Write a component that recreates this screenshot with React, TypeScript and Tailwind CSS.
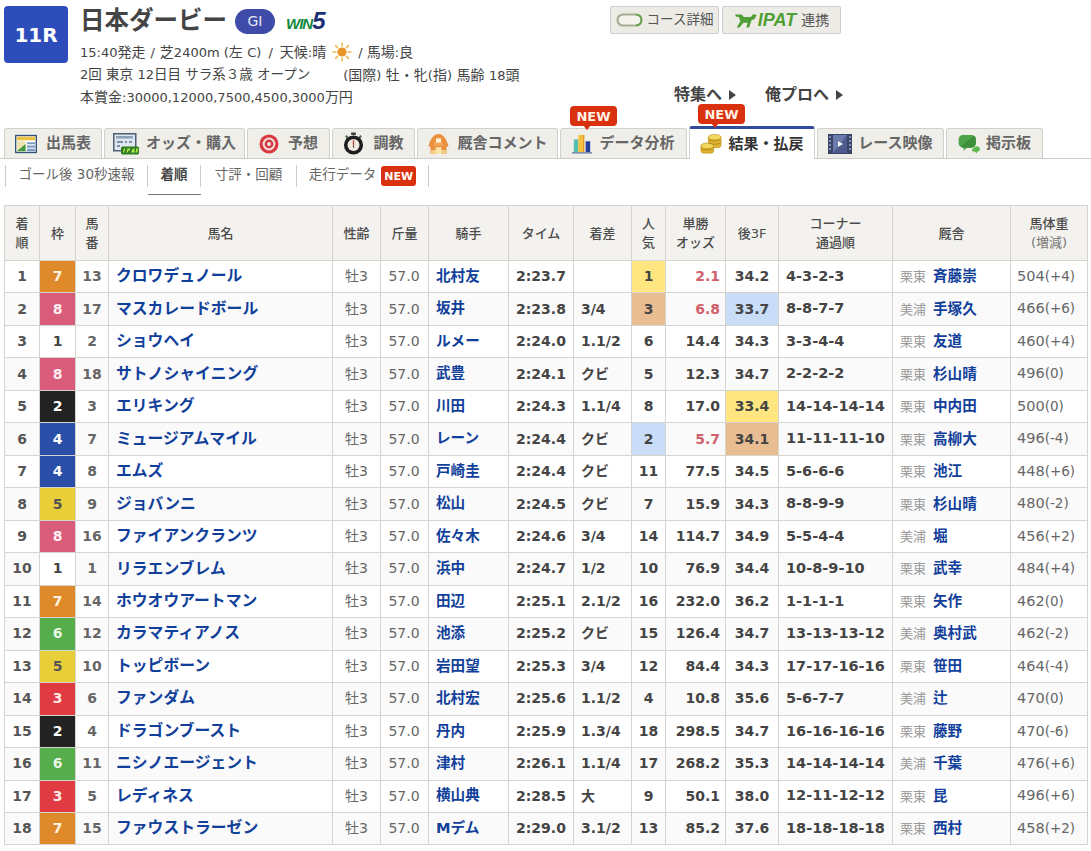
import type { ReactNode } from 'react';

type Row = [number, number, string, string, string, string, number, string, string, string, string, string, string, string];

// 枠 着順 etc. come straight from the result list
const rows: Row[] = [
  [7, 13, 'クロワデュノール', '北村友', '2:23.7', '', 1, '2.1', '34.2', '4-3-2-3', '栗東', '斉藤崇', '504', '(+4)'],
  [8, 17, 'マスカレードボール', '坂井', '2:23.8', '3/4', 3, '6.8', '33.7', '8-8-7-7', '美浦', '手塚久', '466', '(+6)'],
  [1, 2, 'ショウヘイ', 'ルメー', '2:24.0', '1.1/2', 6, '14.4', '34.3', '3-3-4-4', '栗東', '友道', '460', '(+4)'],
  [8, 18, 'サトノシャイニング', '武豊', '2:24.1', 'クビ', 5, '12.3', '34.7', '2-2-2-2', '栗東', '杉山晴', '496', '(0)'],
  [2, 3, 'エリキング', '川田', '2:24.3', '1.1/4', 8, '17.0', '33.4', '14-14-14-14', '栗東', '中内田', '500', '(0)'],
  [4, 7, 'ミュージアムマイル', 'レーン', '2:24.4', 'クビ', 2, '5.7', '34.1', '11-11-11-10', '栗東', '高柳大', '496', '(-4)'],
  [4, 8, 'エムズ', '戸崎圭', '2:24.4', 'クビ', 11, '77.5', '34.5', '5-6-6-6', '栗東', '池江', '448', '(+6)'],
  [5, 9, 'ジョバンニ', '松山', '2:24.5', 'クビ', 7, '15.9', '34.3', '8-8-9-9', '栗東', '杉山晴', '480', '(-2)'],
  [8, 16, 'ファイアンクランツ', '佐々木', '2:24.6', '3/4', 14, '114.7', '34.9', '5-5-4-4', '美浦', '堀', '456', '(+2)'],
  [1, 1, 'リラエンブレム', '浜中', '2:24.7', '1/2', 10, '76.9', '34.4', '10-8-9-10', '栗東', '武幸', '484', '(+4)'],
  [7, 14, 'ホウオウアートマン', '田辺', '2:25.1', '2.1/2', 16, '232.0', '36.2', '1-1-1-1', '栗東', '矢作', '462', '(0)'],
  [6, 12, 'カラマティアノス', '池添', '2:25.2', 'クビ', 15, '126.4', '34.7', '13-13-13-12', '美浦', '奥村武', '462', '(-2)'],
  [5, 10, 'トッピボーン', '岩田望', '2:25.3', '3/4', 12, '84.4', '34.3', '17-17-16-16', '栗東', '笹田', '464', '(-4)'],
  [3, 6, 'ファンダム', '北村宏', '2:25.6', '1.1/2', 4, '10.8', '35.6', '5-6-7-7', '美浦', '辻', '470', '(0)'],
  [2, 4, 'ドラゴンブースト', '丹内', '2:25.9', '1.3/4', 18, '298.5', '34.7', '16-16-16-16', '栗東', '藤野', '470', '(-6)'],
  [6, 11, 'ニシノエージェント', '津村', '2:26.1', '1.1/4', 17, '268.2', '35.3', '14-14-14-14', '美浦', '千葉', '476', '(+6)'],
  [3, 5, 'レディネス', '横山典', '2:28.5', '大', 9, '50.1', '38.0', '12-11-12-12', '栗東', '昆', '496', '(+6)'],
  [7, 15, 'ファウストラーゼン', 'Mデム', '2:29.0', '3.1/2', 13, '85.2', '37.6', '18-18-18-18', '栗東', '西村', '458', '(+2)'],
];

const wakuColor: Record<number, string> = {
  1: 'bg-white text-[#444]',
  2: 'bg-[#222222] text-white',
  3: 'bg-[#e03a42] text-[#ffe9e9]',
  4: 'bg-[#2b4fa8] text-white',
  5: 'bg-[#e8cf3a] text-[#555]',
  6: 'bg-[#55ad4c] text-[#eaf7e6]',
  7: 'bg-[#de8a2a] text-[#fff3e0]',
  8: 'bg-[#d95c7a] text-[#ffeef2]',
};

const rankBg: Record<number, string> = {
  1: 'bg-[#ffe680]',
  2: 'bg-[#c9ddf9]',
  3: 'bg-[#e9bd92]',
};

const last3fBg: Record<string, string> = {
  '33.4': 'bg-[#ffe680]',
  '33.7': 'bg-[#c9ddf9]',
  '34.1': 'bg-[#e9bd92]',
};

const colWidths = [
  'w-[35px]', 'w-[36px]', 'w-[33px]', 'w-[224px]', 'w-[48px]', 'w-[48px]', 'w-[80px]', 'w-[65px]',
  'w-[58px]', 'w-[34px]', 'w-[60px]', 'w-[53px]', 'w-[114px]', 'w-[118px]', 'w-[77px]',
];

const th = 'border border-[#d5d4cf] bg-[#f3f2ee] text-center text-[13px] font-medium leading-[19px] text-[#4c4c4c]';
const td = 'border border-[#d5d4cf] p-0 pb-px leading-none';

// Latin and digits run a little smaller than the kana in the info lines
function L ({ children }: { children: ReactNode }) {
  return <span className="text-[13px]">{children}</span>;
}

function SunIcon () {
  return (
    <svg viewBox="0 0 20 20" className="h-5 w-5">
      <g stroke="#eebb55" strokeWidth="1.6" strokeLinecap="round">
        <path d="M10 1v3M10 16v3M1 10h3M16 10h3M3.6 3.6l2 2M14.4 14.4l2 2M3.6 16.4l2-2M14.4 5.6l2-2" />
      </g>
      <circle cx="10" cy="10" r="4.6" fill="#e9952b" />
    </svg>
  );
}

function TrackIcon () {
  return (
    <svg viewBox="0 0 28 14" className="h-[14px] w-[28px]">
      <rect x="1.5" y="1.5" width="24" height="11" rx="5.5" fill="#f4f3ee" stroke="#a8ad90" strokeWidth="2.2" />
      <path d="M20 1.6c3.5 0 5.5 2.4 5.5 5.4s-2 5.4-5.5 5.4" fill="none" stroke="#5aa34a" strokeWidth="1.6" />
    </svg>
  );
}

function HorseIcon () {
  return (
    <svg viewBox="0 0 22 14" className="h-[15px] w-[24px]">
      <path d="M1 1.5h6l2 2.3h6.500L18 1l3 1-2 3.500-3 1.600-2 6.400h-2.600l1-4.400H8.500L5 13.500H2.300l3.500-5.700-1.500-4L1.300 3.300z" fill="#4f9f34" />
    </svg>
  );
}

function ShutsubaIcon () {
  return (
    <svg viewBox="0 0 24 20" className="h-[20px] w-[22px]">
      <rect x="0.75" y="0.75" width="22.5" height="18.5" fill="#fff" stroke="#33527a" strokeWidth="1.5" />
      <rect x="2" y="2" width="20" height="4" fill="#edc243" />
      <rect x="2" y="7" width="9.5" height="11" fill="#eee3b0" />
      <path d="M2 18l9.5-8v8z" fill="#3f9a3d" />
      <path d="M13 8h9v2.4h-9zM13 11.6h9V14h-9zM13 15.2h9V18h-9z" fill="#7d9cc4" />
    </svg>
  );
}

function OddsIcon () {
  return (
    <svg viewBox="0 0 26 22" className="h-[22px] w-[26px]">
      <rect x="0.75" y="0.75" width="22" height="17" fill="#dfe6ee" stroke="#4c5f78" strokeWidth="1.5" />
      <rect x="3" y="3" width="17" height="2.5" fill="#8ca0b8" />
      <path d="M4 8h6v2H4zM12 8h2v2h-2zM16 8h3v2h-3zM4 12h3v2H4z" fill="#7b8ea5" />
      <rect x="8" y="13.5" width="18" height="8" rx="1.5" fill="#2f7d24" />
      <path d="M10 19.5l1-4h1.200l-1 4zM13.500 19.500l1-4H17v2h-1.800l-.5 2zM18 19.500l2-4h1.200l.5 4zM22.500 19.500l.8-4H25l-.8 4z" fill="#b8f04a" />
    </svg>
  );
}

function TargetIcon () {
  return (
    <svg viewBox="0 0 20 20" className="h-5 w-5">
      <circle cx="10" cy="10" r="9.5" fill="#d8393f" />
      <circle cx="10" cy="10" r="6.4" fill="#f5dfe0" />
      <circle cx="10" cy="10" r="4.4" fill="#cf3b40" />
      <circle cx="10" cy="10" r="1.9" fill="#f5e6e6" />
    </svg>
  );
}

function WatchIcon () {
  return (
    <svg viewBox="0 0 22 24" className="h-[23px] w-[21px]">
      <rect x="8.5" y="0.5" width="5" height="2.5" fill="#3a3a3a" />
      <path d="M3 4l2.5 2.5M19 4l-2.500 2.500" stroke="#4b6b4a" strokeWidth="2.2" />
      <circle cx="11" cy="13.5" r="10" fill="#1d1d1f" />
      <circle cx="11" cy="13.5" r="6.3" fill="#f2ece0" />
      <path d="M11 13.5V8.5" stroke="#c9403a" strokeWidth="1.4" />
      <path d="M11 13.5v3" stroke="#555" strokeWidth="1.2" />
    </svg>
  );
}

function BarnIcon () {
  return (
    <svg viewBox="0 0 22 22" className="h-[22px] w-[23px]">
      <path d="M11 1C6 1 3 6 1 13l2 1v7h16v-7l2-1C19 6 16 1 11 1z" fill="#ea8f3e" />
      <path d="M11 3.5L5 13h12z" fill="#f2a45c" />
      <rect x="8.5" y="5.5" width="5" height="4" fill="#fff3d8" />
      <rect x="3.5" y="14" width="15" height="7" fill="#f4cd84" />
      <rect x="8" y="14.5" width="6" height="6.5" fill="#f8e4a8" />
      <path d="M3.5 14h4.5v3H3.5zM14 14h4.5v3H14z" fill="#ea8f3e" />
    </svg>
  );
}

function BarsIcon () {
  return (
    <svg viewBox="0 0 22 22" className="h-[22px] w-[20px]">
      <rect x="2" y="6" width="5" height="14" fill="#58bfb0" />
      <rect x="7" y="1" width="5" height="19" fill="#f2c23a" />
      <rect x="12" y="1" width="1.6" height="19" fill="#e9972d" />
      <rect x="15" y="8" width="5" height="12" fill="#23419a" />
      <rect x="0" y="20" width="22" height="1.5" fill="#6a7fa8" />
    </svg>
  );
}

function CoinsIcon () {
  return (
    <svg viewBox="0 0 24 22" className="h-[22px] w-[22px]">
      <g fill="#e0b52f" stroke="#b48a1c" strokeWidth="0.6">
        <rect x="9" y="2" width="14" height="13" rx="3" />
        <ellipse cx="16" cy="3.5" rx="7" ry="3" fill="#f3d75e" />
        <rect x="1" y="11" width="14" height="10" rx="3" />
        <ellipse cx="8" cy="13" rx="7" ry="3" fill="#f3d75e" />
      </g>
      <path d="M9.5 6.5c3 1.6 10 1.6 13 0M9.5 10c3 1.6 10 1.6 13 0M1.5 16.5c3 1.6 10 1.6 13 0" fill="none" stroke="#a87f14" strokeWidth="0.8" />
    </svg>
  );
}

function MovieIcon () {
  return (
    <svg viewBox="0 0 24 20" className="h-[20px] w-[24px]">
      <rect width="24" height="20" fill="#3a4468" />
      <path d="M5 1h14v18H5z" fill="#6b7bab" />
      <path d="M5 19L19 1v18z" fill="#4d5c8d" />
      <path d="M10 7l5 3-5 3z" fill="#f4f4f8" />
      <path d="M1 2h2v2H1zM1 6h2v2H1zM1 10h2v2H1zM1 14h2v2H1zM21 2h2v2h-2zM21 6h2v2h-2zM21 10h2v2h-2zM21 14h2v2h-2z" fill="#8890a8" />
    </svg>
  );
}

function ChatIcon () {
  return (
    <svg viewBox="0 0 24 22" className="h-[20px] w-[23px]">
      <path d="M5 1h9c3 0 5 2 5 5v4c0 3-2 5-5 5H9l-3.5 3.500V15C2.500 15 0 13 0 10V6c0-3 2-5 5-5z" fill="#4da34a" />
      <path d="M2 14L17 1.800c1.400.9 2 2.200 2 4.200v4c0 3-2 5-5 5H5.500z" fill="#3c8f3c" />
      <path d="M19 13.500c2.800 0 4.500 1 4.500 3s-1.500 3-3 3l-.5 2-2-2c-2 0-3.500-1-3.500-2.500z" fill="#5cb84f" />
    </svg>
  );
}

function Bubble ({ className }: { className: string }) {
  return (
    <span className={`absolute flex h-[20px] w-[47px] items-center justify-center rounded-[4px] bg-[#d9300f] text-[13px] font-bold leading-none text-[#fff3e6] after:absolute after:left-[13px] after:top-[19px] after:border-x-[4px] after:border-t-[5px] after:border-x-transparent after:border-t-[#d9300f] after:content-[''] ${className}`}>
      NEW
    </span>
  );
}

function Tab ({ width, gap, icon, label, active, children }: { width: string; gap: string; icon: ReactNode; label: string; active?: boolean; children?: ReactNode }) {
  return (
    <div
      className={`relative flex items-center justify-center rounded-t-[3px] border border-b-0 text-[15px] font-bold ${width} ${gap} ${
        active
          ? 'z-10 -mb-px h-[33px] border-x-[#d0d0cc] border-t-[3px] border-t-[#2f4b9a] bg-white text-[#333]'
          : 'h-[30px] border-[#d0d0cc] bg-[#efeee9] text-[#666]'
      }`}
    >
      {icon}
      <span>{label}</span>
      {children}
    </div>
  );
}

function SubItem ({ children, active, width }: { children: ReactNode; active?: boolean; width: string }) {
  return (
    <div className={`flex h-[36px] items-start justify-center pt-[6px] ${width} ${active ? 'border-b border-b-[#777]' : ''}`}>
      <div className="flex h-[22px] w-full items-center justify-center gap-[5px] border-r border-r-[#ccc] pb-[3px]">{children}</div>
    </div>
  );
}

export default function App () {
  return (
    <div className="h-[851px] w-[1091px] overflow-hidden bg-white font-['DejaVu_Sans','Noto_Sans_CJK_JP',sans-serif] text-[#444]">
      {/* レース情報 */}
      <div className="flex h-[128px]">
        <div className="ml-1 mt-[6px] flex h-[57px] w-[64px] items-center justify-center rounded-[4px] bg-[#2d4dbb] text-[20px] font-bold text-white">
          11R
        </div>
        <div className="ml-[12px] w-[530px]">
          <div className="mt-[6px] flex h-[30px] items-center">
            <h1 className="text-[24.5px] font-bold leading-none text-[#444]">日本ダービー</h1>
            <span className="ml-[8px] flex h-[25px] w-[40px] items-center justify-center rounded-full bg-[#3f4ba8] text-[14px] leading-none text-[#e8e8f4]">GI</span>
            <span className="ml-[11px] flex items-baseline font-['Liberation_Sans'] font-bold italic leading-none">
              <span className="text-[15px] tracking-[-1px] text-[#128a3c]">WIN</span>
              <span className="text-[24px] text-[#1c2f74]">5</span>
            </span>
          </div>
          <div className="mt-[4px] flex h-[24px] items-center whitespace-pre text-[14px] leading-none">
            <span><L>15:40</L>発走<span className="mx-[5px] text-[13px]">/</span>芝<L>2400m (</L>左 <L>C)</L><span className="mx-[7px] text-[13px]">/</span>天候<L>:</L>晴</span>
            <span className="mx-[6px]"><SunIcon /></span>
            <span><L>/ </L>馬場<L>:</L>良</span>
          </div>
          <div className="flex h-[22px] items-center whitespace-pre text-[14px] leading-none">
            <span className="text-[13.5px]"><L>2</L>回 東京 <L>12</L>日目 サラ系３歳 オープン</span>
            <span className="ml-[33px]"><L>(</L>国際<L>)</L> 牡・牝<L>(</L>指<L>)</L> 馬齢 <L>18</L>頭</span>
          </div>
          <div className="flex h-[22px] items-center whitespace-pre text-[14px] leading-none">
            <span>本賞金<L>:30000,12000,7500,4500,3000</L>万円</span>
          </div>
        </div>
        <div className="flex flex-col">
          <div className="mt-[6px] flex gap-[3px]">
            <div className="flex h-[28px] w-[109px] items-center justify-center gap-[3px] rounded-[2px] border border-[#ccc] bg-[#edebe6] text-[13.5px] leading-none text-[#555]">
              <TrackIcon />
              コース詳細
            </div>
            <div className="flex h-[28px] w-[119px] items-center justify-center gap-[5px] rounded-[2px] border border-[#ccc] bg-[#edebe6] text-[14px] leading-none text-[#555]">
              <span className="flex items-center font-['Liberation_Sans'] text-[18px] font-bold italic text-[#4f9f34]">
                <HorseIcon />IPAT
              </span>
              連携
            </div>
          </div>
          <div className="ml-[64px] mt-[53px] flex text-[16px] font-bold leading-none text-[#444]">
            <span className="flex w-[91px] items-center gap-[7px]">
              特集へ
              <span className="border-y-[5px] border-l-[7px] border-y-transparent border-l-[#444]" />
            </span>
            <span className="flex items-center gap-[7px]">
              俺プロへ
              <span className="border-y-[5px] border-l-[7px] border-y-transparent border-l-[#444]" />
            </span>
          </div>
        </div>
      </div>

      {/* タブ */}
      <div className="flex h-[31px] items-end gap-[2px] border-b border-b-[#ccc] pl-1">
        <Tab width="w-[98px]" gap="gap-[9px]" icon={<ShutsubaIcon />} label="出馬表" />
        <Tab width="w-[141px]" gap="gap-[7px]" icon={<OddsIcon />} label="オッズ・購入" />
        <Tab width="w-[83px]" gap="gap-[9px]" icon={<TargetIcon />} label="予想" />
        <Tab width="w-[83px]" gap="gap-[9px]" icon={<WatchIcon />} label="調教" />
        <Tab width="w-[141px]" gap="gap-[7px]" icon={<BarnIcon />} label="厩舎コメント" />
        <Tab width="w-[127px]" gap="gap-[7px]" icon={<BarsIcon />} label="データ分析">
          <Bubble className="left-[9px] top-[-23px]" />
        </Tab>
        <Tab width="w-[126px]" gap="gap-[6px]" icon={<CoinsIcon />} label="結果・払戻" active>
          <Bubble className="left-[8px] top-[-25px]" />
        </Tab>
        <Tab width="w-[127px]" gap="gap-[6px]" icon={<MovieIcon />} label="レース映像" />
        <Tab width="w-[97px]" gap="gap-[5px]" icon={<ChatIcon />} label="掲示板" />
      </div>

      {/* サブメニュー */}
      <div className="flex h-[46px] pl-[5px] text-[13.5px] leading-none text-[#666]">
        <div className="mt-[6px] h-[22px] border-l border-l-[#ccc]" />
        <SubItem width="w-[142px]">ゴール後 30秒速報</SubItem>
        <SubItem width="w-[53px]" active><span className="font-bold text-[#444]">着順</span></SubItem>
        <SubItem width="w-[96px]">寸評・回顧</SubItem>
        <SubItem width="w-[132px]">
          走行データ
          <span className="mt-[3px] flex h-[20px] w-[35px] items-center justify-center rounded-[3px] bg-[#d9300f] text-[11px] font-bold text-white">NEW</span>
        </SubItem>
      </div>

      {/* 着順テーブル */}
      <div className="pl-1">
        <table className="w-[1083px] table-fixed border-collapse">
          <colgroup>
            {colWidths.map((w, i) => <col key={i} className={w} />)}
          </colgroup>
          <thead>
            <tr className="h-[55px]">
              <th className={th}>着<br />順</th>
              <th className={th}>枠</th>
              <th className={th}>馬<br />番</th>
              <th className={th}>馬名</th>
              <th className={th}>性齢</th>
              <th className={th}>斤量</th>
              <th className={th}>騎手</th>
              <th className={th}>タイム</th>
              <th className={th}>着差</th>
              <th className={th}>人<br />気</th>
              <th className={th}>単勝<br />オッズ</th>
              <th className={th}>後3F</th>
              <th className={th}>コーナー<br />通過順</th>
              <th className={th}>厩舎</th>
              <th className={th}>馬体重<br /><span className="font-normal text-[#777]">(増減)</span></th>
            </tr>
          </thead>
          <tbody>
            {rows.map((r, i) => (
              <tr key={i} className={`h-[32.47px] ${i % 2 === 1 ? 'bg-[#fafafa]' : 'bg-white'}`}>
                <td className={`${td} text-center text-[14px] font-bold text-[#555]`}>{i + 1}</td>
                <td className={`${td} text-center text-[14px] font-bold ${wakuColor[r[0]]}`}>{r[0]}</td>
                <td className={`${td} text-center text-[14px] font-bold text-[#666]`}>{r[1]}</td>
                <td className={`${td} pl-[7px] text-[15.8px] font-bold text-[#11409a]`}>{r[2]}</td>
                <td className={`${td} text-center text-[14px] text-[#666]`}>牡3</td>
                <td className={`${td} pr-px text-center text-[14px] text-[#666]`}>57.0</td>
                <td className={`${td} pl-[7px] text-[14.6px] font-bold text-[#11409a]`}>{r[3]}</td>
                <td className={`${td} pl-[7px] text-[14px] font-bold text-[#444]`}>{r[4]}</td>
                <td className={`${td} pl-[7px] text-[14px] font-bold text-[#444]`}>{r[5]}</td>
                <td className={`${td} text-center text-[14px] font-bold text-[#444] ${rankBg[r[6]] ?? ''}`}>{r[6]}</td>
                <td className={`${td} pr-[5px] text-right text-[14px] font-bold ${r[6] <= 3 ? 'text-[#d0606a]' : 'text-[#444]'}`}>{r[7]}</td>
                <td className={`${td} text-center text-[14px] font-bold text-[#444] ${last3fBg[r[8]] ?? ''}`}>{r[8]}</td>
                <td className={`${td} pl-[7px] text-[14.5px] font-bold text-[#444]`}>{r[9]}</td>
                <td className={`${td} pl-[7px]`}>
                  <span className="inline-block w-[33px] text-[13px] text-[#999]">{r[10]}</span>
                  <span className="text-[14.6px] font-bold text-[#11409a]">{r[11]}</span>
                </td>
                <td className={`${td} pl-[6px] text-[14.5px] text-[#666]`}>
                  {r[12]}<span className="text-[13.5px]">{r[13]}</span>
                </td>
              </tr>
            ))}
          </tbody>
        </table>
      </div>
    </div>
  );
}
